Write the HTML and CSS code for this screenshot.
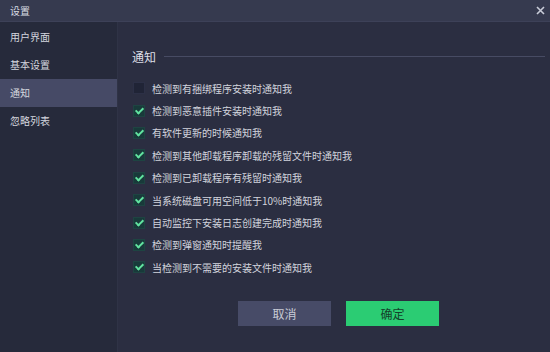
FILE: index.html
```html
<!DOCTYPE html>
<html lang="zh">
<head>
<meta charset="utf-8">
<link rel="stylesheet" href="styles.css">
</head>
<body>
<div class="window">
  <div class="titlebar">
    <span class="title">设置</span>
    <span class="close">
      <svg width="9" height="9" viewBox="0 0 9 9"><path d="M1 1L8 8M8 1L1 8" stroke="#c9ccd8" stroke-width="1.6"/></svg>
    </span>
  </div>
  <div class="main">
    <nav class="sidebar">
      <div class="nav-item">用户界面</div>
      <div class="nav-item">基本设置</div>
      <div class="nav-item active">通知</div>
      <div class="nav-item">忽略列表</div>
    </nav>
    <section class="content">
      <div class="heading"><span>通知</span><i class="rule"></i></div>
      <ul class="options">
        <li><span class="box"></span>检测到有捆绑程序安装时通知我</li>
        <li><span class="box on"></span>检测到恶意插件安装时通知我</li>
        <li><span class="box on"></span>有软件更新的时候通知我</li>
        <li><span class="box on"></span>检测到其他卸载程序卸载的残留文件时通知我</li>
        <li><span class="box on"></span>检测到已卸载程序有残留时通知我</li>
        <li><span class="box on"></span>当系统磁盘可用空间低于10%时通知我</li>
        <li><span class="box on"></span>自动监控下安装日志创建完成时通知我</li>
        <li><span class="box on"></span>检测到弹窗通知时提醒我</li>
        <li><span class="box on"></span>当检测到不需要的安装文件时通知我</li>
      </ul>
      <div class="actions">
        <button class="btn cancel">取消</button>
        <button class="btn ok">确定</button>
      </div>
    </section>
  </div>
</div>
</body>
</html>
```
FILE: styles.css
```css
* { box-sizing: border-box; }
html, body { margin: 0; padding: 0; }
body {
  width: 550px;
  height: 352px;
  overflow: hidden;
  background: #2b2e41;
  font-family: "Noto Sans CJK SC", "Noto Sans", sans-serif;
  font-size: 10px;
  color: #d4d6df;
}
.window { display: flex; flex-direction: column; height: 352px; }
.titlebar {
  height: 22px;
  background: #363a4f;
  border-bottom: 1px solid #3d4158;
  display: flex;
  align-items: center;
  justify-content: space-between;
  padding: 0 4px 0 10px;
  flex: none;
}
.title { font-size: 10px; color: #d8dae2; }
.close { display: flex; width: 12px; height: 12px; align-items: center; justify-content: center; }
.main { display: flex; flex: 1; }
.sidebar {
  width: 118px;
  background: #262a3b;
  border-right: 1px solid #2f3346;
  padding-top: 1px;
  flex: none;
}
.nav-item {
  height: 28px;
  line-height: 28px;
  padding-left: 10px;
  color: #d4d6df;
  font-size: 10px;
}
.nav-item.active { background: #464a66; }
.content {
  flex: 1;
  padding: 23px 5px 0 14px;
  display: flex;
  flex-direction: column;
}
.heading {
  display: flex;
  align-items: center;
  font-size: 12px;
  color: #dcdee6;
  height: 22px;
}
.rule {
  flex: 1;
  height: 1px;
  background: #474b63;
  margin-left: 8px;
}
.options {
  list-style: none;
  margin: 10px 0 0 0;
  padding: 0;
}
.options li {
  height: 22.4px;
  display: flex;
  align-items: center;
  color: #d2d4dd;
  font-size: 10px;
}
.box {
  width: 12px;
  height: 12px;
  background: #202436;
  border: 1px solid #2c3046;
  margin: 0 7px 0 1px;
  flex: none;
  position: relative;
}
.box.on {
  background: #183a3a;
  border-color: #1e4442;
}
.box.on::after {
  content: "";
  position: absolute;
  left: 3px;
  top: 0px;
  width: 3px;
  height: 6px;
  border: solid #62e3a0;
  border-width: 0 2px 2px 0;
  transform: rotate(45deg);
}
.actions {
  display: flex;
  gap: 15px;
  margin: 22px 0 0 106px;
}
.btn {
  width: 93px;
  height: 25px;
  border: none;
  font-family: inherit;
  font-size: 12px;
  padding: 0;
}
.cancel { background: #474b67; color: #c9cbd6; }
.ok { background: #2bcc73; color: #14402a; }
```
